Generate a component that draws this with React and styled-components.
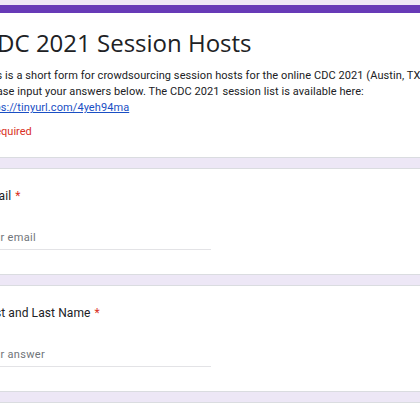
import React from "react";
import styled, { createGlobalStyle } from "styled-components";

const GlobalStyle = createGlobalStyle`
  html, body {
    margin: 0;
    padding: 0;
    background: #ede7f6;
    overflow: hidden;
  }
  body {
    font-family: Roboto, "Noto Sans", Arial, sans-serif;
    color: #202124;
  }
`;

const Page = styled.div`
  width: 480px;
  margin-left: -38px;
  padding-top: 5px;
  display: flex;
  flex-direction: column;
  gap: 10px;
`;

const Card = styled.div`
  background: #fff;
  border: 1px solid #dadce0;
  border-top: ${(p) => (p.$head ? "8px solid #673ab7" : "1px solid #dadce0")};
  border-radius: 6px;
  padding: ${(p) => (p.$head ? "14px 18px 18px" : "18px 18px 18px")};
  height: ${(p) => p.$height}px;
  box-sizing: border-box;
`;

const Title = styled.h1`
  margin: 0;
  font-family: "Open Sans", Roboto, sans-serif;
  font-weight: 400;
  font-size: 24px;
  line-height: 32px;
  color: #202124;
  padding-left: 1px;
`;

const Description = styled.p`
  margin: 9px 0 0;
  font-size: 11px;
  line-height: 16px;
  letter-spacing: 0.08px;
  color: #202124;
  white-space: nowrap;
`;

const Link = styled.a`
  color: #1a4fc4;
  text-decoration: underline;
`;

const Required = styled.div`
  margin-top: 8px;
  font-size: 11px;
  line-height: 16px;
  color: #d93025;
`;

const Label = styled.div`
  font-size: 12px;
  line-height: 18px;
  color: #202124;
  letter-spacing: 0.1px;
`;

const Star = styled.span`
  color: #d93025;
  margin-left: 4px;
`;

const Input = styled.div`
  margin-top: 25px;
  width: 230px;
  padding-bottom: 3px;
  border-bottom: 1px solid #e3e3e6;
  font-size: 11px;
  line-height: 16px;
  color: #70757a;
  letter-spacing: 0.3px;
`;

const Question = ({ label, placeholder }) => (
  <Card $height={107}>
    <Label>
      {label}
      <Star>*</Star>
    </Label>
    <Input>{placeholder}</Input>
  </Card>
);

export default function App() {
  return (
    <>
      <GlobalStyle />
      <Page>
        <Card $head $height={153}>
          <Title>CDC 2021 Session Hosts</Title>
          <Description>
            This is a short form for crowdsourcing session hosts for the online
            CDC 2021 (Austin, TX).
            <br />
            Please input your answers below. The CDC 2021 session list is
            available here:
            <br />
            <Link href="#">https://tinyurl.com/4yeh94ma</Link>
          </Description>
          <Required>* Required</Required>
        </Card>
        <Question label="Email" placeholder="Your email" />
        <Question label="First and Last Name" placeholder="Your answer" />
        <Card $height={60} />
      </Page>
    </>
  );
}
